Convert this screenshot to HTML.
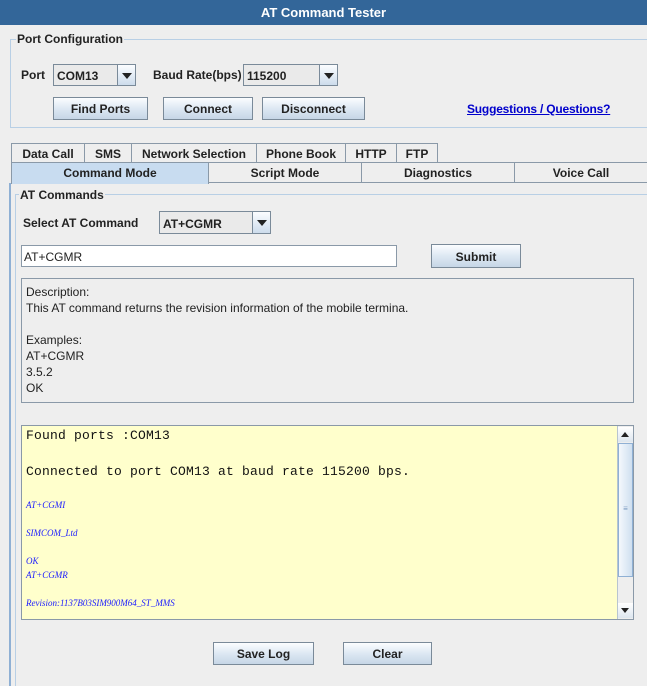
<!DOCTYPE html>
<html><head><style>
*{margin:0;padding:0;box-sizing:border-box}
html,body{width:647px;height:686px;overflow:hidden}
body{background:#eeeeee;font-family:"Liberation Sans",sans-serif;font-size:12px;position:relative;color:#222}
.a{position:absolute;white-space:nowrap}
.b{font-weight:bold}
.btn{position:absolute;border:1px solid #7a8a99;background:linear-gradient(#fbfdff,#dde8f3 50%,#c6d6e6);font-weight:bold;text-align:center;color:#222}
.combo{position:absolute;border:1px solid #7a8a99;background:#eaeaea;font-weight:bold}
.combo .arr{position:absolute;right:0;top:0;bottom:0;width:18px;border-left:1px solid #7a8a99;background:linear-gradient(#fbfdff,#cddcec)}
.combo .arr:after{content:"";position:absolute;left:4px;top:8px;border-left:5px solid transparent;border-right:5px solid transparent;border-top:6px solid #222}
.tab{position:absolute;border:1px solid #8a99a8;border-bottom:none;background:#eeeeee;font-weight:bold;text-align:center;height:20px;line-height:20px}
.grp{position:absolute;border:1px solid #b8cfe5}
.leg{position:absolute;background:#eeeeee;font-weight:bold;padding:0 1px}
.mono{font-family:"Liberation Mono",monospace;font-size:13px;color:#111}
.blue{font-family:"Liberation Serif",serif;font-style:italic;font-size:9px;color:#1a1aff}
</style></head><body>
<div class="a" style="left:0;top:0;width:647px;height:25px;background:#336699;color:#fff;font-weight:bold;font-size:13px;text-align:center;line-height:26px">AT Command Tester</div>
<div class="grp" style="left:10px;top:39px;width:637px;height:89px;border-right:none"></div>
<div class="leg" style="left:16px;top:32px">Port Configuration</div>
<div class="a b" style="left:21px;top:68px">Port</div>
<div class="combo" style="left:53px;top:64px;width:83px;height:22px"><span style="position:absolute;left:3px;top:4px">COM13</span><div class="arr"></div></div>
<div class="a b" style="left:153px;top:68px">Baud Rate(bps)</div>
<div class="combo" style="left:243px;top:64px;width:95px;height:22px"><span style="position:absolute;left:3px;top:4px">115200</span><div class="arr"></div></div>
<div class="btn" style="left:53px;top:97px;width:95px;height:23px;line-height:23px">Find Ports</div>
<div class="btn" style="left:163px;top:97px;width:90px;height:23px;line-height:23px">Connect</div>
<div class="btn" style="left:262px;top:97px;width:103px;height:23px;line-height:23px">Disconnect</div>
<div class="a b" style="left:467px;top:102px;color:#0000cc;text-decoration:underline;letter-spacing:-0.2px">Suggestions / Questions?</div>

<div class="tab" style="left:11px;top:143px;width:74px">Data Call</div>
<div class="tab" style="left:84px;top:143px;width:48px">SMS</div>
<div class="tab" style="left:131px;top:143px;width:126px">Network Selection</div>
<div class="tab" style="left:256px;top:143px;width:90px">Phone Book</div>
<div class="tab" style="left:345px;top:143px;width:52px">HTTP</div>
<div class="tab" style="left:396px;top:143px;width:42px">FTP</div>
<div class="tab" style="left:11px;top:162px;width:198px;height:22px;background:#c8dcf0">Command Mode</div>
<div class="tab" style="left:208px;top:162px;width:154px;border-bottom:1px solid #8a99a8;height:21px">Script Mode</div>
<div class="tab" style="left:361px;top:162px;width:154px;border-bottom:1px solid #8a99a8;height:21px">Diagnostics</div>
<div class="tab" style="left:514px;top:162px;width:133px;border-bottom:1px solid #8a99a8;border-right:none;height:21px">Voice Call</div>
<div class="a" style="left:9px;top:183px;width:2px;height:503px;background:#8fb0d4"></div>

<div class="grp" style="left:15px;top:194px;width:632px;height:492px;border-right:none;border-bottom:none"></div>
<div class="leg" style="left:19px;top:188px">AT Commands</div>
<div class="a b" style="left:23px;top:216px">Select AT Command</div>
<div class="combo" style="left:159px;top:211px;width:112px;height:23px"><span style="position:absolute;left:3px;top:5px">AT+CGMR</span><div class="arr"></div></div>
<div class="a" style="left:21px;top:245px;width:376px;height:22px;border:1px solid #8a99a8;background:#fff;padding:4px 2px">AT+CGMR</div>
<div class="btn" style="left:431px;top:244px;width:90px;height:24px;line-height:24px">Submit</div>
<div class="a" style="left:21px;top:278px;width:613px;height:125px;border:1px solid #8a99a8;padding:5px 4px;line-height:16px;color:#222">Description:<br>This AT command returns the revision information of the mobile termina.<br><br>Examples:<br>AT+CGMR<br>3.5.2<br>OK</div>

<div class="a" style="left:21px;top:425px;width:613px;height:195px;border:1px solid #8a99a8;background:#ffffcc"></div>
<div class="a mono" style="left:26px;top:428px;letter-spacing:0.2px">Found ports :COM13</div>
<div class="a mono" style="left:26px;top:464px;letter-spacing:0.2px">Connected to port COM13 at baud rate 115200 bps.</div>
<div class="a blue" style="left:26px;top:500px">AT+CGMI</div>
<div class="a blue" style="left:26px;top:528px">SIMCOM_Ltd</div>
<div class="a blue" style="left:26px;top:556px">OK</div>
<div class="a blue" style="left:26px;top:570px">AT+CGMR</div>
<div class="a blue" style="left:26px;top:598px">Revision:1137B03SIM900M64_ST_MMS</div>
<div class="a" style="left:617px;top:426px;width:16px;height:193px;background:#eeeeee;border-left:1px solid #b8c4d0"></div>
<div class="a" style="left:618px;top:427px;width:15px;height:15px;background:linear-gradient(#fff,#dde6ef)"><div style="margin:5px 0 0 3px;border-left:4px solid transparent;border-right:4px solid transparent;border-bottom:5px solid #222;width:0"></div></div>
<div class="a" style="left:618px;top:443px;width:15px;height:134px;border:1px solid #8fb0d4;background:linear-gradient(90deg,#f4f8fc,#cfdff0);text-align:center;font-size:8px;line-height:130px;color:#7a9ac0">≡</div>
<div class="a" style="left:618px;top:603px;width:15px;height:15px;background:linear-gradient(#fff,#dde6ef)"><div style="margin:5px 0 0 3px;border-left:4px solid transparent;border-right:4px solid transparent;border-top:5px solid #222;width:0"></div></div>

<div class="btn" style="left:213px;top:642px;width:101px;height:23px;line-height:23px">Save Log</div>
<div class="btn" style="left:343px;top:642px;width:89px;height:23px;line-height:23px">Clear</div>
</body></html>
